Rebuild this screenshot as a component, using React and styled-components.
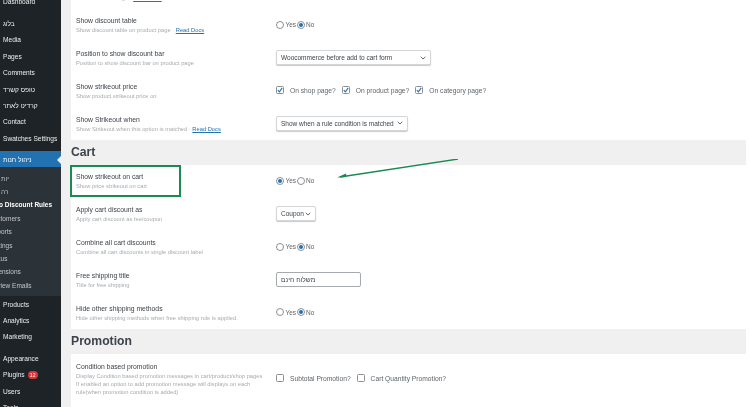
import React from 'react';
import styled, { createGlobalStyle, css } from 'styled-components';

const GlobalStyle = createGlobalStyle`
  html, body {
    margin: 0;
    padding: 0;
    height: 407px;
    overflow: hidden;
    background: #ffffff;
  }
  body {
    font-family: "Liberation Sans", Arial, sans-serif;
  }
`;

const Page = styled.div`
  display: flex;
  box-sizing: border-box;
  width: 750px;
  height: 407px;
  padding-right: 4px;
  overflow: hidden;
  background: #ffffff;
  filter: blur(0.4px);
`;

const Sidebar = styled.nav`
  flex: 0 0 61px;
  height: 407px;
  overflow: hidden;
  background: #1d2327;
  font-size: 6.6px;
  color: #eceded;
`;

const MenuList = styled.div`
  margin-top: -7px;
`;

const MenuItem = styled.div`
  position: relative;
  display: flex;
  align-items: center;
  gap: 3px;
  height: 16.4px;
  padding-left: 3px;
  white-space: nowrap;
  margin-top: ${(p) => p.$gap || 0}px;

  ${(p) =>
    p.$active &&
    css`
      background: #2271b1;
      color: #ffffff;
      &::after {
        content: '';
        position: absolute;
        right: 0;
        top: 5px;
        border: 4px solid transparent;
        border-right-color: #f0f0f1;
        border-left: 0;
      }
    `}
`;

const SubMenu = styled.div`
  background: #2c3338;
  padding: 4.3px 0 3.8px;
`;

const SubItem = styled.div`
  height: 13.4px;
  line-height: 13.4px;
  font-size: 6.5px;
  white-space: nowrap;
  color: ${(p) => (p.$current ? '#ffffff' : '#c3c4c7')};
  font-weight: ${(p) => (p.$current ? 700 : 400)};
  margin-left: ${(p) => (p.$flush ? 1 : -11)}px;
`;

const Badge = styled.span`
  display: inline-flex;
  align-items: center;
  justify-content: center;
  width: 10px;
  height: 8px;
  border-radius: 4px;
  background: #d63638;
  color: #ffffff;
  font-size: 5px;
`;

const Main = styled.main`
  flex: 1;
  background: #f0f0f1;
  padding-left: 10px;
  overflow: hidden;
`;

const Stack = styled.div`
  margin-top: -24.4px;
`;

const Card = styled.section`
  position: relative;
  background: #ffffff;
  padding: ${(p) => p.$pad || '0'};
`;

const SectionTitle = styled.h2`
  margin: 0;
  height: 25px;
  line-height: 25px;
  font-size: 12.2px;
  font-weight: 700;
  color: #3c434a;
`;

const Row = styled.div`
  display: grid;
  grid-template-columns: 200px 1fr;
  height: 32.8px;
  padding-left: 5px;
  align-items: center;
`;

const LabelCol = styled.div`
  min-width: 0;
`;

const Title = styled.div`
  font-size: 6.8px;
  line-height: 11px;
  color: #3c434a;
  white-space: nowrap;
`;

const Desc = styled.div`
  font-size: 5.75px;
  line-height: 8px;
  color: #a7aaad;
  white-space: nowrap;

  a {
    color: #2271b1;
    text-decoration: underline;
  }
`;

const Controls = styled.div`
  display: flex;
  align-items: center;
  font-size: 6.5px;
  color: #5f656b;
`;

const Radio = styled.span`
  flex: none;
  box-sizing: border-box;
  width: 8px;
  height: 8px;
  border-radius: 50%;
  border: 1px solid #8c8f94;
  background: #ffffff;
  display: inline-flex;
  align-items: center;
  justify-content: center;
  ${(p) =>
    p.$on &&
    css`
      &::before {
        content: '';
        width: 4px;
        height: 4px;
        border-radius: 50%;
        background: #2271b1;
      }
    `}
`;

const RadioText = styled.span`
  margin: 0 2px 0 1.5px;
  width: 9px;
`;

const Check = styled.span`
  flex: none;
  box-sizing: border-box;
  width: 8px;
  height: 8px;
  border: 1px solid #8c8f94;
  border-radius: 1.5px;
  background: #ffffff;
  display: inline-flex;
  align-items: center;
  justify-content: center;
`;

const CheckText = styled.span`
  margin: 0 6px;
  font-size: 6.7px;
  white-space: nowrap;
`;

const Select = styled.div`
  box-sizing: border-box;
  width: ${(p) => p.$w}px;
  height: 15px;
  display: flex;
  align-items: center;
  justify-content: space-between;
  padding: 0 4px;
  border: 1px solid #d4d5d7;
  border-radius: 2px;
  box-shadow: 0 1px 1px #c9cacc;
  background: #ffffff;
  font-size: 6.5px;
  color: #3c434a;
  white-space: nowrap;
`;

const TextInput = styled.div`
  box-sizing: border-box;
  width: 85px;
  height: 15px;
  display: flex;
  align-items: center;
  padding: 0 4px;
  border: 1px solid #a7aaad;
  border-radius: 2px;
  font-size: 6.7px;
  color: #3c434a;
`;

const GreenBox = styled.div`
  position: absolute;
  left: -1px;
  top: 0.7px;
  box-sizing: border-box;
  width: 111px;
  height: 32px;
  border: 2px solid #1a8a50;
`;

const ArrowSvg = styled.svg`
  position: absolute;
  left: 266px;
  top: -6px;
`;

const Chevron = () => (
  <svg width="6" height="4" viewBox="0 0 6 4" fill="none">
    <path d="M0.7 0.8 L3 3 L5.3 0.8" stroke="#50575e" strokeWidth="0.9" />
  </svg>
);

const Tick = () => (
  <svg width="6" height="6" viewBox="0 0 6 6" fill="none">
    <path d="M0.8 3.2 L2.4 4.8 L5.2 0.9" stroke="#2271b1" strokeWidth="1.1" />
  </svg>
);

const YesNo = ({ yes }) => (
  <Controls>
    <Radio $on={yes} />
    <RadioText>Yes</RadioText>
    <Radio $on={!yes} />
    <RadioText>No</RadioText>
  </Controls>
);

const CheckList = ({ items, checked }) => (
  <Controls>
    {items.map((item) => (
      <React.Fragment key={item}>
        <Check>{checked && <Tick />}</Check>
        <CheckText>{item}</CheckText>
      </React.Fragment>
    ))}
  </Controls>
);

const SettingRow = ({ title, desc, children }) => (
  <Row>
    <LabelCol>
      <Title>{title}</Title>
      <Desc>{desc}</Desc>
    </LabelCol>
    <div>{children}</div>
  </Row>
);

const ReadDocs = () => <a href="#docs">Read Docs</a>;

export default function App() {
  return (
    <>
      <GlobalStyle />
      <Page>
        <Sidebar>
          <MenuList>
            <MenuItem>Dashboard</MenuItem>
            <MenuItem $gap={6}>בלוג</MenuItem>
            <MenuItem>Media</MenuItem>
            <MenuItem>Pages</MenuItem>
            <MenuItem>Comments</MenuItem>
            <MenuItem>טופס קשרד</MenuItem>
            <MenuItem>קרדיט לאתר</MenuItem>
            <MenuItem>Contact</MenuItem>
            <MenuItem>Swatches Settings</MenuItem>
            <MenuItem $active $gap={4.4}>ניהול חנות</MenuItem>
            <SubMenu>
              <SubItem $flush>יות</SubItem>
              <SubItem $flush>רה</SubItem>
              <SubItem $current>Woo Discount Rules</SubItem>
              <SubItem>Customers</SubItem>
              <SubItem>Reports</SubItem>
              <SubItem>Settings</SubItem>
              <SubItem>Status</SubItem>
              <SubItem>Extensions</SubItem>
              <SubItem>Review Emails</SubItem>
            </SubMenu>
            <MenuItem>Products</MenuItem>
            <MenuItem>Analytics</MenuItem>
            <MenuItem>Marketing</MenuItem>
            <MenuItem $gap={5}>Appearance</MenuItem>
            <MenuItem>
              Plugins <Badge>12</Badge>
            </MenuItem>
            <MenuItem>Users</MenuItem>
            <MenuItem>Tools</MenuItem>
          </MenuList>
        </Sidebar>
        <Main>
          <Stack>
            <Card>
              <SettingRow title="Show sale badge" desc={<>Show on sale badge · <ReadDocs /></>}>
                <YesNo />
              </SettingRow>
              <SettingRow title="Show discount table" desc={<>Show discount table on product page · <ReadDocs /></>}>
                <YesNo />
              </SettingRow>
              <SettingRow title="Position to show discount bar" desc="Position to show discount bar on product page">
                <Select $w={155}>
                  Woocommerce before add to cart form
                  <Chevron />
                </Select>
              </SettingRow>
              <SettingRow title="Show strikeout price" desc="Show product strikeout price on">
                <CheckList checked items={['On shop page?', 'On product page?', 'On category page?']} />
              </SettingRow>
              <SettingRow title="Show Strikeout when" desc={<>Show Strikeout when this option is matched · <ReadDocs /></>}>
                <Select $w={132}>
                  Show when a rule condition is matched
                  <Chevron />
                </Select>
              </SettingRow>
            </Card>
            <SectionTitle>Cart</SectionTitle>
            <Card>
              <GreenBox />
              <ArrowSvg width="130" height="30" viewBox="0 0 130 30" fill="none">
                <path d="M121 0 L3 18" stroke="#1a8a50" strokeWidth="1.3" />
                <path d="M0 18.5 L9 14.5 L9.5 18 Z" fill="#1a8a50" />
              </ArrowSvg>
              <SettingRow title="Show strikeout on cart" desc="Show price strikeout on cart">
                <YesNo yes />
              </SettingRow>
              <SettingRow title="Apply cart discount as" desc="Apply cart discount as fee/coupon">
                <Select $w={40}>
                  Coupon
                  <Chevron />
                </Select>
              </SettingRow>
              <SettingRow title="Combine all cart discounts" desc="Combine all cart discounts in single discount label">
                <YesNo />
              </SettingRow>
              <SettingRow title="Free shipping title" desc="Title for free shipping">
                <TextInput>משלוח חינם</TextInput>
              </SettingRow>
              <SettingRow title="Hide other shipping methods" desc="Hide other shipping methods when free shipping rule is applied.">
                <YesNo />
              </SettingRow>
            </Card>
            <SectionTitle>Promotion</SectionTitle>
            <Card $pad="7px 0 0">
              <SettingRow
                title="Condition based promotion"
                desc={
                  <>
                    Display Condition based promotion messages in cart/product/shop pages
                    <br />
                    If enabled an option to add promotion message will displays on each
                    <br />
                    rule(when promotion condition is added)
                  </>
                }
              >
                <CheckList items={['Subtotal Promotion?', 'Cart Quantity Promotion?']} />
              </SettingRow>
              <Row />
            </Card>
          </Stack>
        </Main>
      </Page>
    </>
  );
}
